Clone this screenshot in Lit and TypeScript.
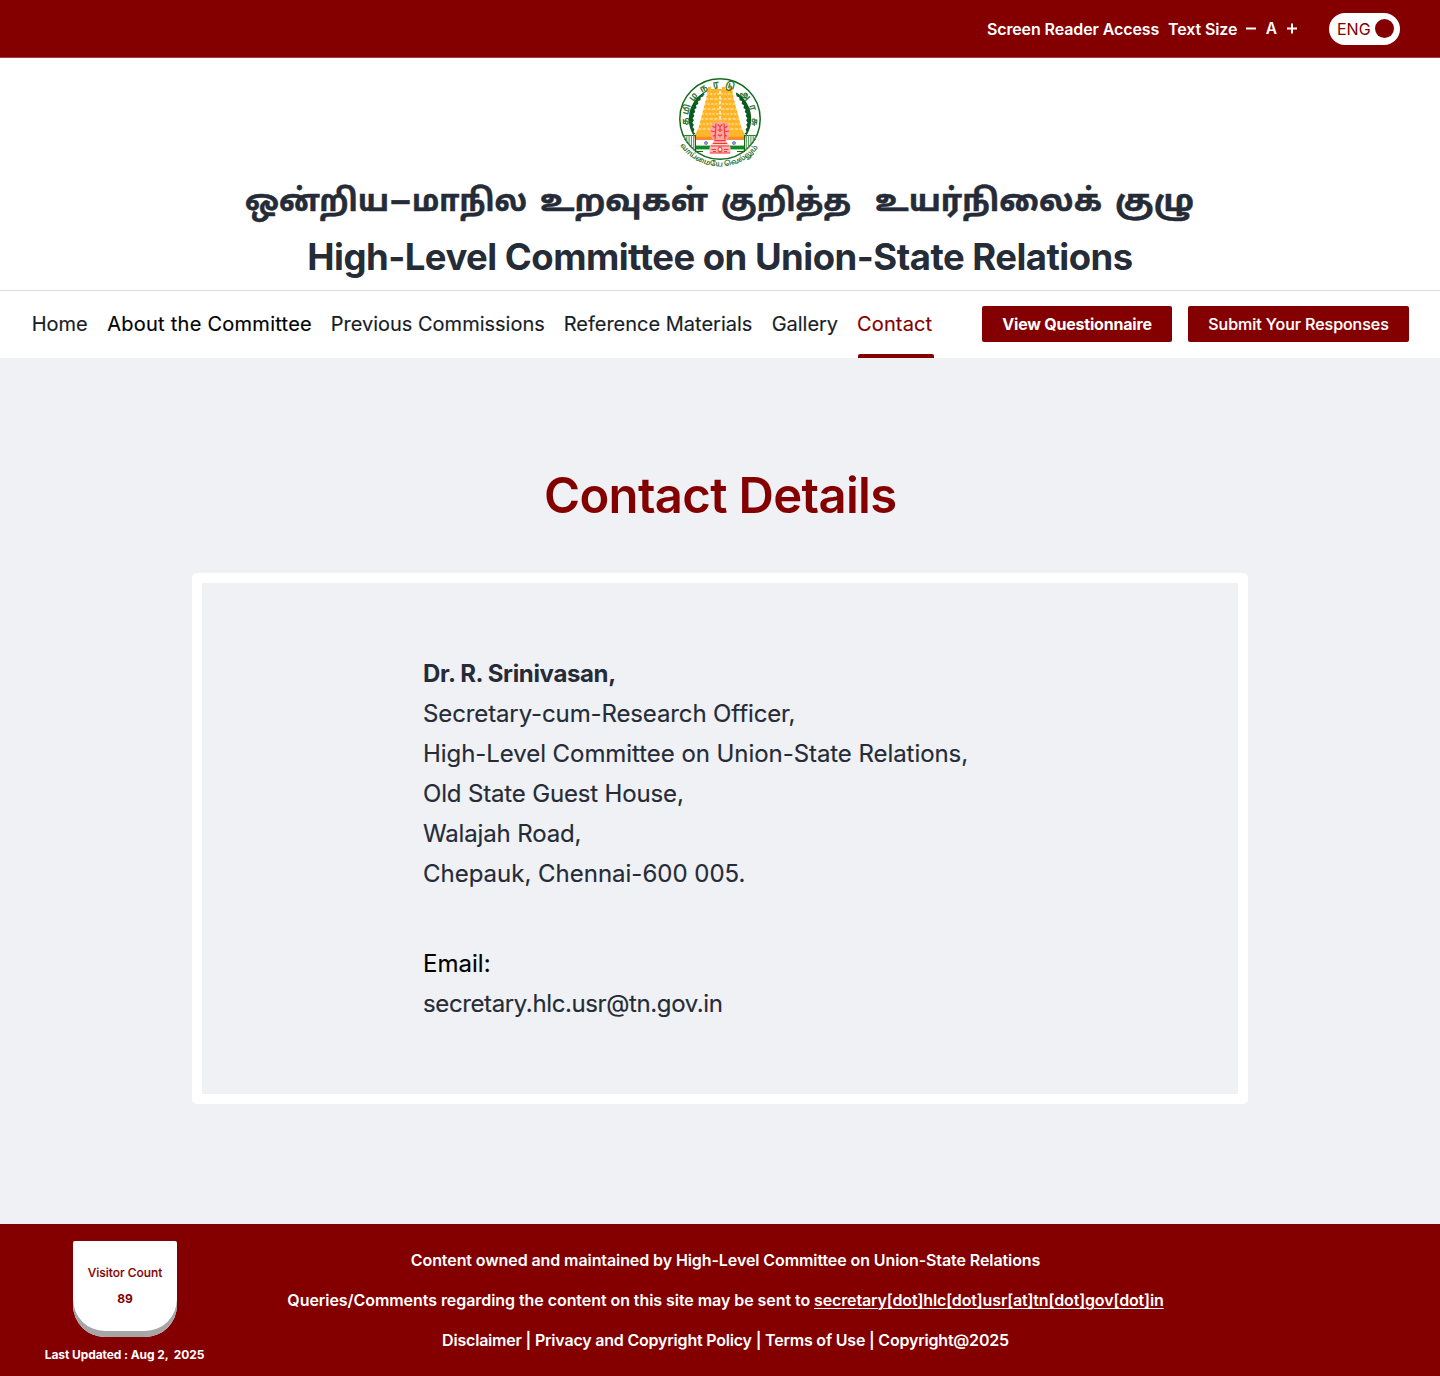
import { LitElement, html, svg, css } from "lit";
import { customElement } from "lit/decorators.js";
import { classMap } from "lit/directives/class-map.js";

/** State emblem: ringed temple tower over the flag and lion capital. */
@customElement("state-emblem")
class StateEmblem extends LitElement {
  static styles = css`
    :host { display: block; width: 90px; height: 94px; }
    svg { display: block; overflow: visible; }
    text { font-family: "Noto Sans Tamil", "Noto Sans", sans-serif; fill: #14691c; }
    .ring { font-size: 9px; text-anchor: middle; stroke: #14691c; stroke-width: 0.3; }
    .motto { font-size: 7px; stroke: #14691c; stroke-width: 0.15; }
  `;
  private letters: [string, number][] = [
    ["த", -94], ["மி", -74], ["ழ", -50], ["ந", -28], ["ர", -7],
    ["டு", 17], ["அ", 47], ["ர", 71], ["சு", 95],
  ];
  /** Serrated crescent between the letter ring and the tower, centred on 45,45. */
  private sidePath(side: number) {
    const inner: string[] = [];
    const outer: string[] = [];
    const steps = 19;
    for (let i = 0; i <= steps; i++) {
      const a = ((-58 + (i * 89) / steps) * Math.PI) / 180;
      const t = Math.sin((i / steps) * Math.PI * 0.9 + 0.15);
      const r = 30.6 - 3.4 * t - (i % 2 ? 1.5 : 0);
      outer.push(`${(45 + side * 31.2 * Math.cos(a)).toFixed(2)} ${(45 + 31.2 * Math.sin(a)).toFixed(2)}`);
      inner.unshift(`${(45 + side * r * Math.cos(a)).toFixed(2)} ${(45 + r * Math.sin(a)).toFixed(2)}`);
    }
    return `M${outer.concat(inner).join("L")}Z`;
  }
  render() {
    const rows = [0, 1, 2, 3, 4, 5, 6, 7];
    return html`<svg width="90" height="94" viewBox="0 0 90 94" role="img">
      <circle cx="45" cy="45" r="40.2" fill="#fff" stroke="#14691c" stroke-width="1.5" />
      ${[-1, 1].map((s) => svg`<path d=${this.sidePath(s)} fill="#0c5a20" />`)}
      <path d="M33 13h3v2h4v-2h3v2h4v-2h3v2h4v-2h3l1.500 11 4 15 4 15 5 10H18.500l5-10 4-15 4-15z" fill="#ffb62b" />
      ${rows.map((i) => svg`<path d="M${31.5 - i * 1.2} ${20 + i * 5}H${58.5 + i * 1.2}" stroke="#fff0c8" stroke-width="1" stroke-dasharray="${2 + (i % 2)} 1.6" />`)}
      ${rows.map((i) => svg`<path d="M${32.5 - i * 1.2} ${17.5 + i * 5}H${58 + i * 1.2}" stroke="#f7a41c" stroke-width=".8" stroke-dasharray="1.3 2.4" />`)}
      <path d="M45 17V48" stroke="#fff0c8" stroke-width="1.8" stroke-dasharray="3 2" />
      <path d="M8 61.500H20.500V77.500H28M82 61.500H69.500V77.500H62" fill="none" stroke="#14691c" stroke-width="1.2" />
      ${[0, 1, 2, 3, 4].map((i) => svg`<path d="M${9.5 + i * 2.3} 61V${66 + i * 2.6}M${80.5 - i * 2.3} 61V${66 + i * 2.6}" stroke="#5b9660" stroke-width="1.1" />`)}
      <rect x="21" y="62.8" width="48" height="3.4" fill="#f78b2d" />
      <rect x="21" y="66.2" width="48" height="5.4" fill="#fff" />
      <rect x="21" y="71.6" width="48" height="3.8" fill="#128a24" />
      <circle cx="31" cy="69" r="1.6" fill="#8f9bd8" stroke="#3c4dab" stroke-width=".5" />
      <circle cx="59" cy="69" r="1.6" fill="#8f9bd8" stroke="#3c4dab" stroke-width=".5" />
      <path d="M35 57c0-6 3-8.500 6.500-9l3.500-1 3.500 1c3.500.500 6.500 3 6.500 9 0 4-1.500 7-4 10l2 3h-16l2-3c-2.500-3-4-6-4-10z" fill="#ffa5a0" />
      <path d="M37.500 52l3.500 2.500M36 57l5 1M38 62l3-1M52.500 52l-3.500 2.500M54 57l-5 1M52 62l-3-1M42.500 50.500l2.500 2 2.500-2M42.500 56h5M43 60.500l2 1.500 2-1.500M45 53v5M41 49.500l-1 16M49 49.500l1 16M39.500 66.500h11M38 69.500h14" fill="none" stroke="#ee3b39" stroke-width="1.2" />
      <path d="M36 70.500h18l1.500 3v6h-21v-6z" fill="#ffb8b5" />
      <path d="M36 72h18M35 79h20M36.500 75.500h4.500M49 75.500h4.500M38 77.500h3M49 77.500h3M45 72v7" stroke="#ee3f3d" stroke-width="1.2" />
      <circle cx="45" cy="75.5" r="2" fill="#fff" stroke="#ee3f3d" stroke-width="1.1" />
      ${this.letters.map(
        ([c, a]) => svg`<text class="ring" transform="rotate(${a} 45 45) translate(45 13)">${c}</text>`,
      )}
      <path id="motto" d="M5.500 71.500A48 48 0 0 0 84.500 71.500" fill="none" />
      <text class="motto"><textPath href="#motto" textLength="90" lengthAdjust="spacingAndGlyphs">வாய்மையே வெல்லும்</textPath></text>
    </svg>`;
  }
}

@customElement("app-root")
class AppRoot extends LitElement {
  static styles = css`
    :host { display: block; font-family: Inter, "Liberation Sans", sans-serif; font-feature-settings: "calt" 0; color: #252b37; background: #f0f1f5; }
    * { box-sizing: border-box; }
    a { color: inherit; text-decoration: none; }
    .page { display: flex; flex-direction: column; height: 1376px; }

    .top { height: 58px; background: #840000; border-bottom: 1px solid #a13c3c; color: #fff; display: flex; align-items: center; justify-content: flex-end; padding-right: 40px; font-size: 16px; font-weight: 600; line-height: 20px; }
    .reader { letter-spacing: -0.11px; margin-right: 9px; }
    .size { letter-spacing: -0.12px; margin-right: 8.5px; }
    .tools { display: flex; align-items: center; gap: 9px; margin-right: 32px; }
    .tools svg { display: block; }
    .letter { width: 13.2px; text-align: center; font-size: 15.5px; line-height: 18px; }
    .toggle { width: 71px; height: 32px; border-radius: 16px; background: #fff; color: #840000; display: flex; align-items: center; justify-content: space-between; padding: 0 6px 0 8px; font-weight: 400; }
    .knob { width: 19px; height: 19px; border-radius: 50%; background: #840000; }

    .head { height: 233px; background: #fff; border-bottom: 1px solid #dcdde6; display: flex; flex-direction: column; align-items: center; padding-top: 16px; }
    .tamil { display: block; margin-top: 8px; height: 54px; overflow: visible; font-family: "Noto Sans Tamil", "Noto Sans", sans-serif; font-weight: 700; font-size: 31px; fill: #252b37; stroke: #252b37; stroke-width: 0.5px; }
    .title { margin: 2px 0 0; font-size: 36.5px; line-height: 50px; font-weight: 700; letter-spacing: -0.52px; white-space: nowrap; }

    .nav { height: 67px; background: #fff; display: flex; justify-content: space-between; padding: 0 31px; }
    .menu { display: grid; grid-template-columns: 75.5px 223.5px 233px 208px 86px 76px; font-size: 20px; color: #181d27; white-space: nowrap; line-height: 66px; padding-left: 0.7px; margin-right: -1px; -webkit-text-stroke: 0.15px; }
    .item { display: block; height: 67px; letter-spacing: 0; }
    .item.n1 { letter-spacing: 0.26px; color: #000; }
    .item.n4 { letter-spacing: -0.03px; }
    .item.n5 { letter-spacing: 0.15px; }
    .active { color: #840000; display: flex; flex-direction: column; line-height: 63px; padding-top: 1.5px; margin-left: -0.7px; }
    .active::after { content: ""; flex: none; height: 4px; margin-top: -1.5px; width: 76px; margin-left: 0.5px; background: #840000; border-radius: 2px 2px 0 0; }
    .buttons { display: flex; gap: 16px; padding-top: 15px; }
    .btn { height: 36px; border-radius: 2px; background: #840000; color: #fff; font-size: 16px; line-height: 36px; text-align: center; white-space: nowrap; }
    .view { width: 190px; font-weight: 700; letter-spacing: -0.2px; }
    .submit { width: 221px; font-weight: 500; letter-spacing: -0.04px; -webkit-text-stroke: 0.15px; }

    .main { flex: 1; display: flex; flex-direction: column; align-items: center; padding-top: 108px; }
    .heading { margin: 0; color: #840000; font-size: 49px; line-height: 60px; font-weight: 600; letter-spacing: -0.65px; padding-left: 0.5px; }
    .card { width: 1056px; height: 531px; margin-top: 47px; border: 10px solid #fff; border-radius: 5px; padding: 71px 0 0 221px; font-size: 24px; line-height: 40px; white-space: nowrap; -webkit-text-stroke: 0.15px; }
    .card p { margin: 0; }
    .card .l0 { font-weight: 700; letter-spacing: -0.36px; -webkit-text-stroke: 0; }
    .l1 { letter-spacing: -0.12px; }
    .l2 { letter-spacing: -0.06px; }
    .l3 { letter-spacing: -0.16px; }
    .l4 { letter-spacing: -0.15px; }
    .l5 { letter-spacing: -0.01px; }
    .email { padding-top: 50px; color: #000; letter-spacing: 0.02px; }
    .mail { letter-spacing: -0.38px; }

    .foot { height: 152px; background: #840000; color: #fff; display: flex; }
    .count { width: 249px; display: flex; flex-direction: column; align-items: center; padding-top: 17px; font-size: 12px; font-weight: 700; line-height: 18px; white-space: pre; }
    .badge { width: 104px; height: 96px; background: #fff; border-radius: 2px 2px 32px 32px; box-shadow: inset 0 -6px 0 #a6a6a6; color: #840000; display: flex; flex-direction: column; align-items: center; gap: 8px; padding: 23px 0 0 1px; margin-bottom: 9px; }
    .visitor { font-weight: 500; -webkit-text-stroke: 0.15px; }
    .updated { letter-spacing: -0.09px; }
    .links { width: 953px; display: flex; flex-direction: column; align-items: center; padding-top: 16px; font-size: 16px; line-height: 40px; font-weight: 600; white-space: pre; }
    .links p { margin: 0; }
    .f0 { letter-spacing: -0.09px; }
    .f1 { letter-spacing: -0.06px; }
    .f2 { letter-spacing: -0.2px; }
    .addr { text-decoration: underline; text-underline-offset: 2px; text-decoration-thickness: 1px; letter-spacing: -0.14px; }
  `;

  private menu = ["Home", "About the Committee", "Previous Commissions", "Reference Materials", "Gallery", "Contact"];
  private address = [
    "Dr. R. Srinivasan,",
    "Secretary-cum-Research Officer,",
    "High-Level Committee on Union-State Relations,",
    "Old State Guest House,",
    "Walajah Road,",
    "Chepauk, Chennai-600 005.",
  ];
  // Each word of the Tamil title with its left edge and set width.
  private words: [string, number, number][] = [
    ["ஒன்றிய", 0, 144],
    ["–", 145, 21],
    ["மாநில", 167, 115],
    ["உறவுகள்", 295, 168],
    ["குறித்த", 476, 130],
    ["உயர்நிலைக்", 630, 227],
    ["குழு", 870, 79],
  ];

  render() {
    return html`<div class="page">
      <div class="top">
        <span class="reader">Screen Reader Access</span>
        <span class="size">Text Size</span>
        <span class="tools">
          <svg width="10" height="12" viewBox="0 0 10 12"><path d="M0 5.500H10" stroke="#fff" stroke-width="2" /></svg>
          <span class="letter">A</span>
          <svg width="10" height="12" viewBox="0 0 10 12"><path d="M0 5.500H10M5 .500V10.500" stroke="#fff" stroke-width="2" /></svg>
        </span>
        <span class="toggle"><span>ENG</span><i class="knob"></i></span>
      </div>
      <header class="head">
        <state-emblem></state-emblem>
        <svg class="tamil" width="950" height="54" viewBox="0 0 950 54">
          ${this.words.map(
            ([w, x, len]) => svg`<text x=${x} y="35" textLength=${len} lengthAdjust="spacingAndGlyphs">${w}</text>`,
          )}
        </svg>
        <h1 class="title">High-Level Committee on Union-State Relations</h1>
      </header>
      <nav class="nav">
        <div class="menu">
          ${this.menu.map(
            (m, i) => html`<a class=${classMap({ item: true, [`n${i}`]: true, active: m === "Contact" })}>${m}</a>`,
          )}
        </div>
        <div class="buttons">
          <a class="btn view">View Questionnaire</a>
          <a class="btn submit">Submit Your Responses</a>
        </div>
      </nav>
      <main class="main">
        <h2 class="heading">Contact Details</h2>
        <section class="card">
          ${this.address.map((l, i) => html`<p class="l${i}">${l}</p>`)}
          <p class="email">Email:</p>
          <p class="mail">secretary.hlc.usr@tn.gov.in</p>
        </section>
      </main>
      <footer class="foot">
        <div class="count">
          <div class="badge"><span class="visitor">Visitor Count</span><span>89</span></div>
          <span class="updated">Last Updated : Aug 2,  2025</span>
        </div>
        <div class="links">
          <p class="f0">Content owned and maintained by High-Level Committee on Union-State Relations</p>
          <p class="f1">Queries/Comments regarding the content on this site may be sent to <a class="addr">secretary[dot]hlc[dot]usr[at]tn[dot]gov[dot]in</a></p>
          <p class="f2">Disclaimer | Privacy and Copyright Policy | Terms of Use | Copyright@2025</p>
        </div>
      </footer>
    </div>`;
  }
}
